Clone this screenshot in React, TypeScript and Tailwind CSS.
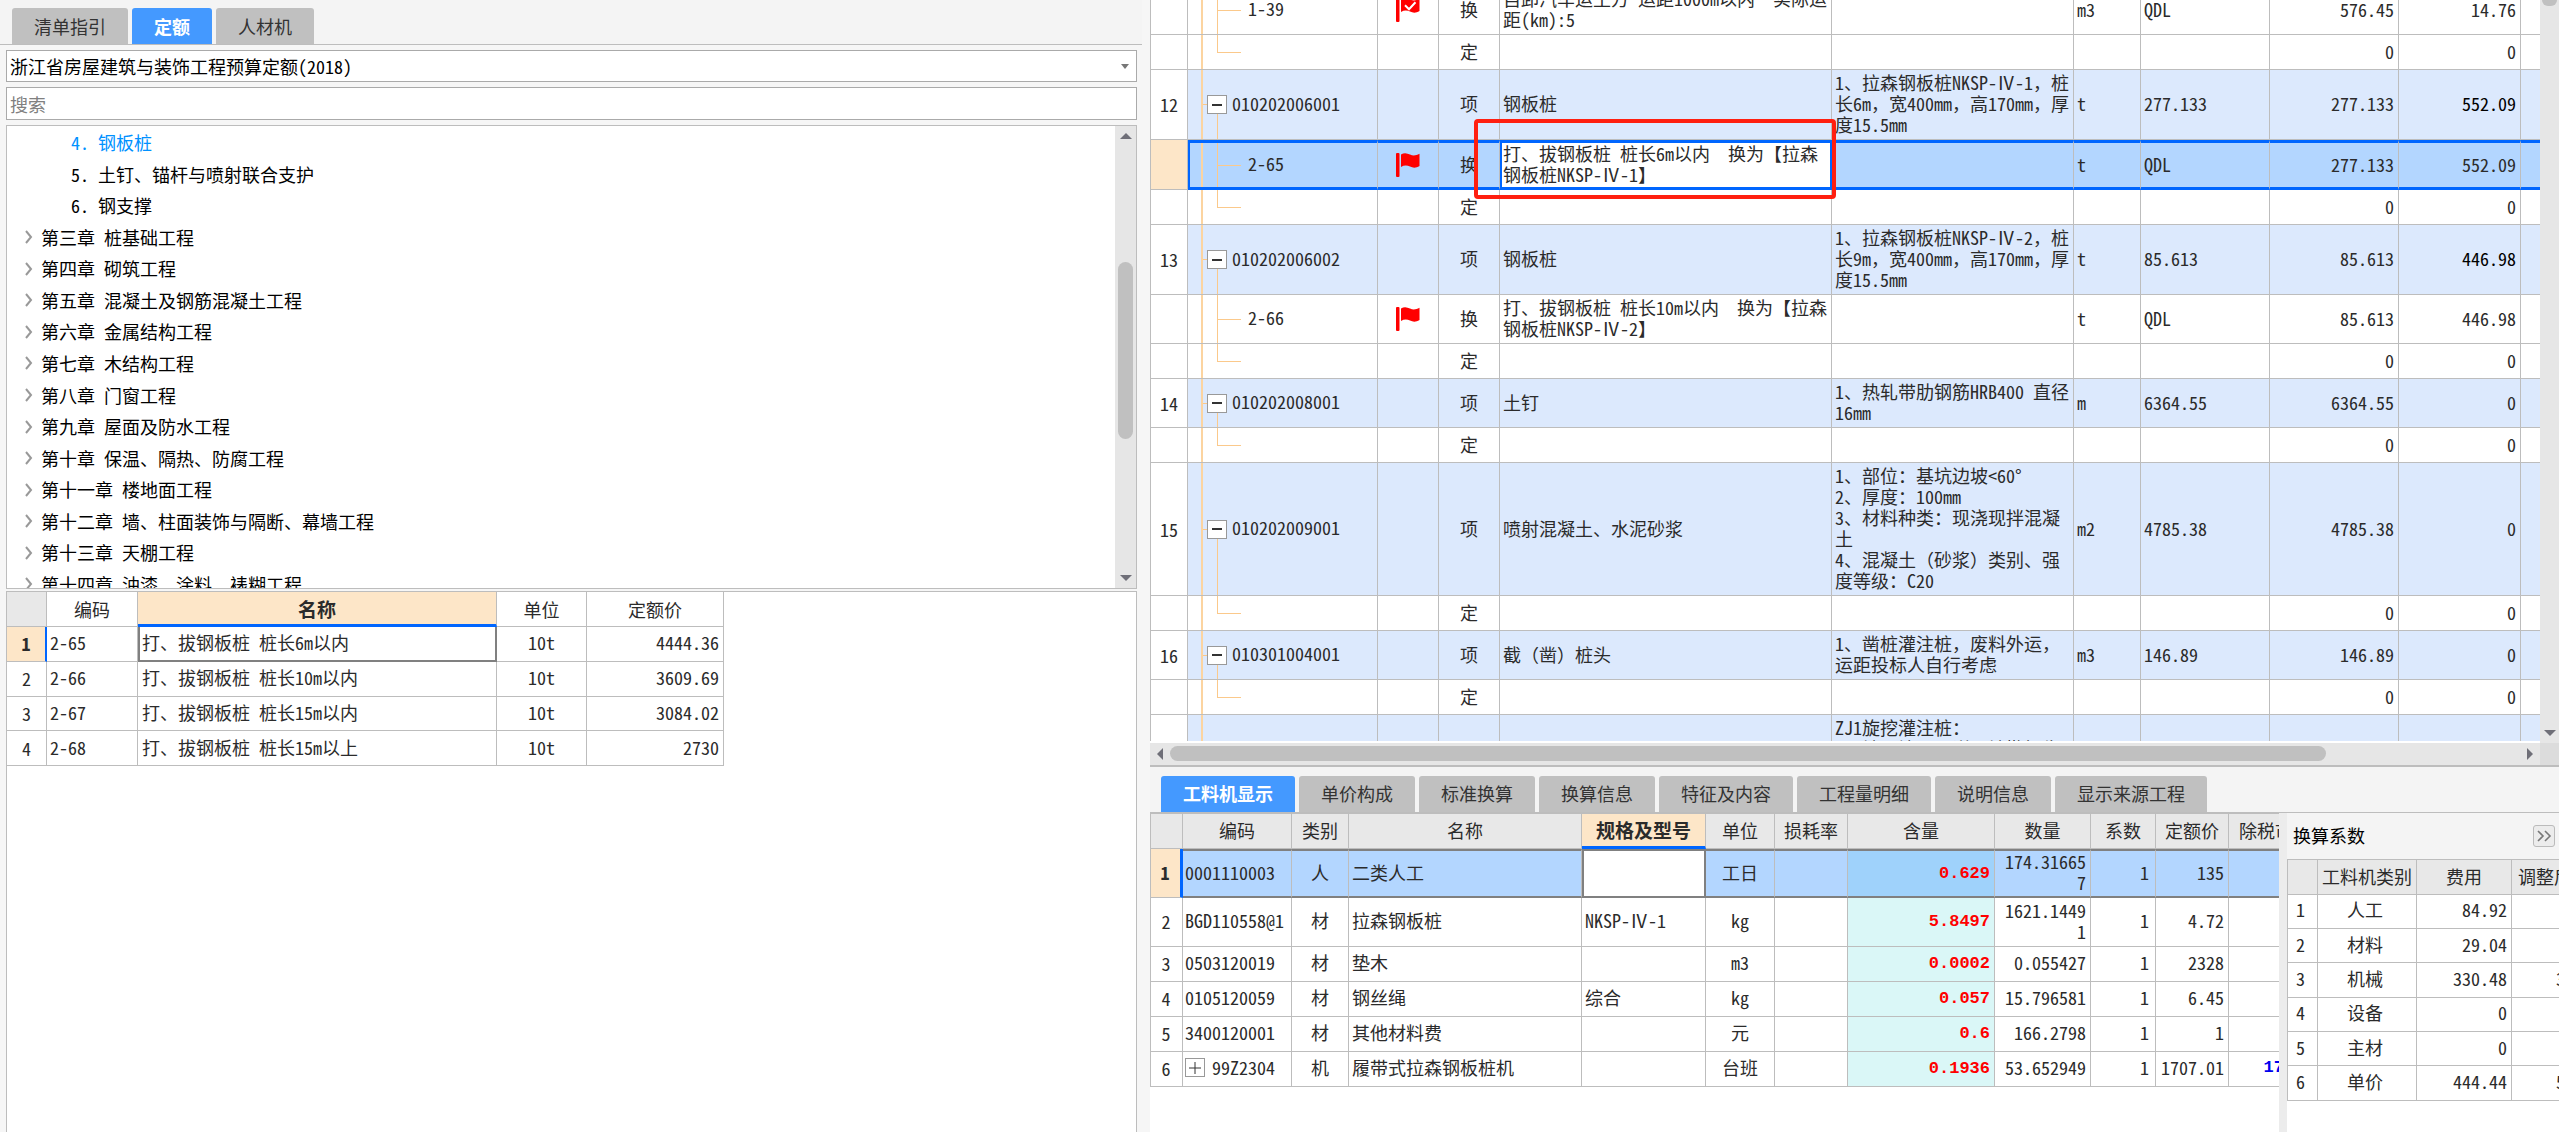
import React, { useState } from 'react';

type RowKind = 'item' | 'sub' | 'last';

interface BillRow {
  kind: RowKind;
  height: string;
  no?: string;
  code?: string;
  flag?: 'plain' | 'checked';
  type: string;
  name?: string;
  feature?: string;
  unit?: string;
  expr?: string;
  qty: string;
  price: string;
  selected?: boolean;
}

interface Resource {
  code: string;
  expandable?: boolean;
  type: string;
  name: string;
  spec: string;
  unit: string;
  content: string;
  qty: string;
  price: string;
  market?: string;
}

const subItems = ['4. 钢板桩', '5. 土钉、锚杆与喷射联合支护', '6. 钢支撑'];

const chapters = [
  '第三章 桩基础工程',
  '第四章 砌筑工程',
  '第五章 混凝土及钢筋混凝土工程',
  '第六章 金属结构工程',
  '第七章 木结构工程',
  '第八章 门窗工程',
  '第九章 屋面及防水工程',
  '第十章 保温、隔热、防腐工程',
  '第十一章 楼地面工程',
  '第十二章 墙、柱面装饰与隔断、幕墙工程',
  '第十三章 天棚工程',
  '第十四章 油漆、涂料、裱糊工程',
];

const quotas = [
  { code: '2-65', name: '打、拔钢板桩 桩长6m以内', price: '4444.36' },
  { code: '2-66', name: '打、拔钢板桩 桩长10m以内', price: '3609.69' },
  { code: '2-67', name: '打、拔钢板桩 桩长15m以内', price: '3084.02' },
  { code: '2-68', name: '打、拔钢板桩 桩长15m以上', price: '2730' },
];

const billRows: BillRow[] = [
  { kind: 'sub', height: 'h-[49px]', code: '1-39', flag: 'checked', type: '换', name: '自卸汽车运土方 运距1000m以内  实际运\n距(km):5', unit: 'm3', expr: 'QDL', qty: '576.45', price: '14.76' },
  { kind: 'last', height: 'h-[35px]', type: '定', qty: '0', price: '0' },
  { kind: 'item', height: 'h-[70px]', no: '12', code: '010202006001', type: '项', name: '钢板桩', feature: '1、拉森钢板桩NKSP-Ⅳ-1，桩\n长6m，宽400mm，高170mm，厚\n度15.5mm', unit: 't', expr: '277.133', qty: '277.133', price: '552.09' },
  { kind: 'sub', height: 'h-[50px]', code: '2-65', flag: 'plain', type: '换', name: '打、拔钢板桩 桩长6m以内  换为【拉森\n钢板桩NKSP-Ⅳ-1】', unit: 't', expr: 'QDL', qty: '277.133', price: '552.09', selected: true },
  { kind: 'last', height: 'h-[35px]', type: '定', qty: '0', price: '0' },
  { kind: 'item', height: 'h-[70px]', no: '13', code: '010202006002', type: '项', name: '钢板桩', feature: '1、拉森钢板桩NKSP-Ⅳ-2，桩\n长9m，宽400mm，高170mm，厚\n度15.5mm', unit: 't', expr: '85.613', qty: '85.613', price: '446.98' },
  { kind: 'sub', height: 'h-[49px]', code: '2-66', flag: 'plain', type: '换', name: '打、拔钢板桩 桩长10m以内  换为【拉森\n钢板桩NKSP-Ⅳ-2】', unit: 't', expr: 'QDL', qty: '85.613', price: '446.98' },
  { kind: 'last', height: 'h-[35px]', type: '定', qty: '0', price: '0' },
  { kind: 'item', height: 'h-[49px]', no: '14', code: '010202008001', type: '项', name: '土钉', feature: '1、热轧带肋钢筋HRB400 直径\n16mm', unit: 'm', expr: '6364.55', qty: '6364.55', price: '0' },
  { kind: 'last', height: 'h-[35px]', type: '定', qty: '0', price: '0' },
  { kind: 'item', height: 'h-[133px]', no: '15', code: '010202009001', type: '项', name: '喷射混凝土、水泥砂浆', feature: '1、部位：基坑边坡<60°\n2、厚度：100mm\n3、材料种类：现浇现拌混凝\n土\n4、混凝土（砂浆）类别、强\n度等级：C20', unit: 'm2', expr: '4785.38', qty: '4785.38', price: '0' },
  { kind: 'last', height: 'h-[35px]', type: '定', qty: '0', price: '0' },
  { kind: 'item', height: 'h-[49px]', no: '16', code: '010301004001', type: '项', name: '截（凿）桩头', feature: '1、凿桩灌注桩，废料外运，\n运距投标人自行考虑', unit: 'm3', expr: '146.89', qty: '146.89', price: '0' },
  { kind: 'last', height: 'h-[35px]', type: '定', qty: '0', price: '0' },
  { kind: 'item', height: 'h-[133px]', no: '17', code: '010302001001', type: '项', name: '泥浆护壁成孔灌注桩', feature: 'ZJ1旋挖灌注桩：\n1、地层情况：详见地勘报告\n2、桩径：800mm\n3、成孔方法：旋挖成孔\n4、混凝土强度等级：C35\n5、桩长：详见图纸', unit: 'm3', expr: '0', qty: '0', price: '0' },
];

const detailTabs = ['工料机显示', '单价构成', '标准换算', '换算信息', '特征及内容', '工程量明细', '说明信息', '显示来源工程'];

const resources: Resource[] = [
  { code: '0001110003', type: '人', name: '二类人工', spec: '', unit: '工日', content: '0.629', qty: '174.31665\n7', price: '135' },
  { code: 'BGD110558@1', type: '材', name: '拉森钢板桩', spec: 'NKSP-Ⅳ-1', unit: 'kg', content: '5.8497', qty: '1621.1449\n1', price: '4.72' },
  { code: '0503120019', type: '材', name: '垫木', spec: '', unit: 'm3', content: '0.0002', qty: '0.055427', price: '2328' },
  { code: '0105120059', type: '材', name: '钢丝绳', spec: '综合', unit: 'kg', content: '0.057', qty: '15.796581', price: '6.45' },
  { code: '3400120001', type: '材', name: '其他材料费', spec: '', unit: '元', content: '0.6', qty: '166.2798', price: '1' },
  { code: '99Z2304', expandable: true, type: '机', name: '履带式拉森钢板桩机', spec: '', unit: '台班', content: '0.1936', qty: '53.652949', price: '1707.01', market: '1707.01' },
];

const factors = [
  { type: '人工', cost: '84.92', adjusted: '84.92' },
  { type: '材料', cost: '29.04', adjusted: '29.04' },
  { type: '机械', cost: '330.48', adjusted: '330.48' },
  { type: '设备', cost: '0', adjusted: '0' },
  { type: '主材', cost: '0', adjusted: '0' },
  { type: '单价', cost: '444.44', adjusted: '544.44' },
];

// Latin is half width everywhere, but CJK punctuation keeps its full width
const Mixed: React.FC<{ text?: string }> = ({ text = '' }) => (
  <>
    {text.split(/([，（）：【】Ⅳ])/).map((part, i) =>
      i % 2 === 1 ? (
        <span key={i} className="[font-feature-settings:normal]">
          {part}
        </span>
      ) : (
        part
      )
    )}
  </>
);

const Arrow: React.FC<{ dir: 'up' | 'down' | 'left' | 'right' }> = ({ dir }) => {
  const points = {
    up: '0,9 6,3 12,9',
    down: '0,3 6,9 12,3',
    left: '9,0 3,6 9,12',
    right: '3,0 9,6 3,12',
  };
  return (
    <svg viewBox="0 0 12 12" className="block h-3 w-3 shrink-0 fill-[#6f6f78]">
      <polygon points={points[dir]} />
    </svg>
  );
};

const Flag: React.FC<{ checked?: boolean }> = ({ checked }) => (
  <svg viewBox="0 0 24 24" className="block h-6 w-6">
    <rect x="0" y="0" width="3.5" height="24" rx="1" fill="#ff0000" />
    <path d="M5 1.5C8-0.6 11 0 14 1.5S20 2.6 23.5 0.8V13C20 15.2 17 15 14 13.6S8 12.2 5 14Z" fill="#ff0000" />
    {checked && <path d="M9 7.2l4 4 6.5-7" fill="none" stroke="#fff" strokeWidth="2" />}
  </svg>
);

interface TabsProps {
  tabs: string[];
  active: string;
  onChange: (tab: string) => void;
}

const Tabs: React.FC<TabsProps> = ({ tabs, active, onChange }) => (
  <div className="flex gap-1">
    {tabs.map((tab) => (
      <button
        key={tab}
        onClick={() => onChange(tab)}
        className={`h-9 rounded-t-[3px] px-[22px] ${
          tab === active ? 'bg-[#4499ff] font-bold text-white' : 'bg-[#c0c0c0] text-[#333]'
        }`}
      >
        {tab}
      </button>
    ))}
  </div>
);

// Code column: tree lines, expander and the code itself
const CodeCell: React.FC<{ row: BillRow }> = ({ row }) => (
  <div className="flex h-full items-stretch">
    <div className={`shrink-0 border-r-2 border-[#fcd4a0] ${row.selected ? 'w-[13px]' : 'w-[15px]'}`} />
    {row.kind === 'item' ? (
      <>
        <div className="h-px w-1 shrink-0 self-center bg-[#fbc98b]" />
        <div className="flex w-5 shrink-0 flex-col items-center">
          <div className="flex-1" />
          <button aria-label="折叠" className="flex h-[19px] w-5 items-center justify-center border border-[#999] bg-white">
            <span className="h-[2px] w-2.5 bg-[#333]" />
          </button>
          <div className="w-px flex-1 bg-[#fbc98b]" />
        </div>
        <span className="self-center pb-[3px] pl-[5px]">{row.code}</span>
      </>
    ) : (
      <>
        <div className="w-3.5 shrink-0" />
        <div className="flex w-6 shrink-0 flex-col">
          <div className="flex-1 border-b border-l border-[#fbc98b]" />
          <div className={`flex-1 ${row.kind === 'sub' ? 'border-l border-[#fbc98b]' : ''}`} />
        </div>
        <span className="self-center pb-[3px] pl-[7px]">{row.code}</span>
      </>
    )}
  </div>
);

const BillTable: React.FC = () => (
  <table className="-mt-3.5 w-full table-fixed border-separate border-spacing-0 border-l border-[#bdbdbd]">
    <colgroup>
      <col className="w-[37px]" />
      <col className="w-[190px]" />
      <col className="w-[61px]" />
      <col className="w-[61px]" />
      <col className="w-[332px]" />
      <col className="w-[242px]" />
      <col className="w-[67px]" />
      <col className="w-[129px]" />
      <col className="w-[129px]" />
      <col className="w-[122px]" />
      <col />
    </colgroup>
    <tbody>
      {billRows.map((row, i) => {
        const line = row.selected
          ? 'border-y-[3px] border-r border-y-[#0066ff] border-r-[#bdbdbd]'
          : 'border-b border-r border-[#bdbdbd]';
        const bg = row.selected ? 'bg-[#b3d6ff]' : row.kind === 'item' ? 'bg-[#dce9fd]' : 'bg-white';
        const cell = `${line} ${bg} p-0 align-middle whitespace-pre`;
        const textCell = `${cell} pb-0.5 pl-[3px]`;
        const numberCell = `${cell} pr-1 pb-0.5 text-right`;
        return (
          <tr key={i} className={row.height}>
            <td className={`border-r border-b border-[#bdbdbd] p-0 text-center ${row.selected ? 'bg-[#fde6c8]' : 'bg-white'}`}>
              {row.no}
            </td>
            <td className={`${cell} ${row.height} ${row.selected ? 'border-l-2 border-l-[#0066ff]' : ''}`}>
              <CodeCell row={row} />
            </td>
            <td className={`${cell} pl-[18px]`}>{row.flag && <Flag checked={row.flag === 'checked'} />}</td>
            <td className={`${cell} pb-0.5 text-center`}>{row.type}</td>
            {row.selected ? (
              <td className="relative border-x-2 border-y-[3px] border-[#0066ff] bg-white p-0 pb-0.5 pl-px align-middle whitespace-pre">
                <Mixed text={row.name} />
                <span className="pointer-events-none absolute -top-6 -right-1.5 -bottom-3 -left-7 z-10 rounded-[4px] border-4 border-[#ff1f10]" />
              </td>
            ) : (
              <td className={textCell}>
                <Mixed text={row.name} />
              </td>
            )}
            <td className={textCell}>
              <Mixed text={row.feature} />
            </td>
            <td className={textCell}>{row.unit}</td>
            <td className={textCell}>{row.expr}</td>
            <td className={numberCell}>{row.qty}</td>
            <td className={`${numberCell} ${row.kind === 'item' && row.price !== '0' ? 'text-black' : ''}`}>{row.price}</td>
            <td className={`${line} ${bg} border-r-0`} />
          </tr>
        );
      })}
    </tbody>
  </table>
);

const ResourceTable: React.FC = () => {
  const head = 'border-r border-b border-[#bdbdbd] bg-[#e8e8e8] p-0 font-normal whitespace-nowrap';
  return (
    <table className="w-[1190px] table-fixed border-separate border-spacing-0 border-t border-l border-[#bdbdbd]">
      <colgroup>
        <col className="w-8" />
        <col className="w-[109px]" />
        <col className="w-[57px]" />
        <col className="w-[233px]" />
        <col className="w-[124px]" />
        <col className="w-[69px]" />
        <col className="w-[73px]" />
        <col className="w-[147px]" />
        <col className="w-24" />
        <col className="w-[65px]" />
        <col className="w-[73px]" />
        <col />
      </colgroup>
      <thead>
        <tr className="h-[35px]">
          <th className={head} />
          <th className={head}>编码</th>
          <th className={head}>类别</th>
          <th className={head}>名称</th>
          <th className="border-r border-b-[3px] border-r-[#bdbdbd] border-b-[#0066ff] bg-[#fde6c8] p-0 text-[19px] font-bold">规格及型号</th>
          <th className={head}>单位</th>
          <th className={head}>损耗率</th>
          <th className={head}>含量</th>
          <th className={head}>数量</th>
          <th className={head}>系数</th>
          <th className={head}>定额价</th>
          <th className={head}>除税市场价</th>
        </tr>
      </thead>
      <tbody>
        {resources.map((r, i) => {
          const first = i === 0;
          const height = first || i === 1 ? 'h-[49px]' : 'h-[35px]';
          const cell = first
            ? 'border-y-2 border-r border-y-[#808080] border-r-[#bdbdbd] bg-[#b3d6ff] p-0 pb-0.5 whitespace-pre'
            : 'border-r border-b border-[#bdbdbd] p-0 pb-0.5 whitespace-pre';
          return (
            <tr key={r.code} className={height}>
              <td
                className={`p-0 pr-px text-center ${
                  first
                    ? 'border-r-[3px] border-b border-r-[#0066ff] border-b-[#bdbdbd] bg-[#fde6c8] font-bold'
                    : 'border-r border-b border-[#bdbdbd]'
                }`}
              >
                {i + 1}
              </td>
              <td className={`${cell} pl-0.5`}>
                {r.expandable ? (
                  <div className="flex items-center gap-[7px]">
                    <button aria-label="展开" className="flex h-[19px] w-5 items-center justify-center border border-[#999] bg-white">
                      <svg viewBox="0 0 12 12" className="h-3 w-3 stroke-[#333]">
                        <path d="M6 0v12M0 6h12" />
                      </svg>
                    </button>
                    <span>{r.code}</span>
                  </div>
                ) : (
                  r.code
                )}
              </td>
              <td className={`${cell} text-center`}>{r.type}</td>
              <td className={`${cell} pl-[3px]`}>{r.name}</td>
              {first ? (
                <td className="border-2 border-[#808080] bg-white p-0" />
              ) : (
                <td className={`${cell} pl-[3px]`}>
                  <Mixed text={r.spec} />
                </td>
              )}
              <td className={`${cell} text-center`}>{r.unit}</td>
              <td className={cell} />
              <td
                className={`p-0 pr-1 text-right font-['Liberation_Mono',monospace] text-[17px] font-bold text-[#ff0000] ${
                  first
                    ? 'border-y-2 border-r border-y-[#808080] border-r-[#bdbdbd] bg-[#9fd2fb]'
                    : 'border-r border-b border-[#bdbdbd] bg-[#daf7f7]'
                }`}
              >
                {r.content}
              </td>
              <td className={`${cell} pr-1 text-right`}>{r.qty}</td>
              <td className={`${cell} pr-1.5 text-right`}>1</td>
              <td className={`${cell} pr-1 text-right`}>{r.price}</td>
              <td className={`${cell} pr-1 text-right font-['Liberation_Mono',monospace] text-[17px] font-bold text-[#0000ee]`}>
                {r.market}
              </td>
            </tr>
          );
        })}
      </tbody>
    </table>
  );
};

const FactorPanel: React.FC = () => {
  const cell = 'border-r border-b border-[#bdbdbd] p-0 whitespace-nowrap';
  const head = `${cell} bg-[#e8e8e8] font-normal`;
  return (
    <aside className="flex w-[272px] shrink-0 flex-col overflow-hidden bg-white">
      <div className="flex h-[46px] shrink-0 items-center justify-between bg-[#f4f4f4] pr-1 pl-1.5">
        <h2 className="text-black">换算系数</h2>
        <button aria-label="收起" className="flex h-[22px] w-[22px] items-center justify-center rounded-[3px] border border-[#bbb] bg-[#ececec]">
          <svg viewBox="0 0 16 16" className="h-4 w-4 fill-none stroke-[#777]" strokeWidth="1.6">
            <path d="M2 3l5 5-5 5M9 3l5 5-5 5" />
          </svg>
        </button>
      </div>
      <table className="h-[242px] w-[328px] table-fixed border-separate border-spacing-0 border-t border-l border-[#bdbdbd]">
        <colgroup>
          <col className="w-[30px]" />
          <col className="w-[99px]" />
          <col className="w-[95px]" />
          <col />
        </colgroup>
        <thead>
          <tr className="h-[35px]">
            <th className={head} />
            <th className={head}>工料机类别</th>
            <th className={head}>费用</th>
            <th className={head}>调整后费用</th>
          </tr>
        </thead>
        <tbody>
          {factors.map((f, i) => (
            <tr key={f.type}>
              <td className={`${cell} pr-1 pb-[3px] text-center`}>{i + 1}</td>
              <td className={`${cell} pr-1 pb-[3px] text-center`}>{f.type}</td>
              <td className={`${cell} pr-1 pb-[3px] text-right`}>{f.cost}</td>
              <td className={`${cell} pr-1 pb-[3px] text-right`}>{f.adjusted}</td>
            </tr>
          ))}
        </tbody>
      </table>
    </aside>
  );
};

const QuotaTable: React.FC = () => {
  const cell = 'border-r border-b border-[#bdbdbd] p-0 whitespace-nowrap';
  return (
    <table className="h-[174px] w-[717px] table-fixed border-separate border-spacing-0">
      <colgroup>
        <col className="w-10" />
        <col className="w-[91px]" />
        <col className="w-[359px]" />
        <col className="w-[90px]" />
        <col />
      </colgroup>
      <thead>
        <tr className="h-[35px]">
          <th className={`${cell} bg-[#e8e8e8]`} />
          <th className={`${cell} font-normal`}>编码</th>
          <th className="border-r border-b-[3px] border-r-[#bdbdbd] border-b-[#0066ff] bg-[#fde6c8] p-0 text-[19px] font-bold">名称</th>
          <th className={`${cell} font-normal`}>单位</th>
          <th className={`${cell} font-normal`}>定额价</th>
        </tr>
      </thead>
      <tbody>
        {quotas.map((q, i) => (
          <tr key={q.code}>
            <td
              className={`p-0 text-center ${
                i === 0
                  ? 'border-r-2 border-b border-r-[#0066ff] border-b-[#bdbdbd] bg-[#fde6c8] font-bold'
                  : 'border-r border-b border-[#bdbdbd]'
              }`}
            >
              {i + 1}
            </td>
            <td className={`${cell} pb-0.5 pl-[3px]`}>{q.code}</td>
            <td className={i === 0 ? 'border-2 border-t-0 border-[#808080] p-0 pb-px pl-0.5' : `${cell} pb-0.5 pl-1`}>{q.name}</td>
            <td className={`${cell} pb-0.5 text-center`}>10t</td>
            <td className={`${cell} pr-1 pb-0.5 text-right`}>{q.price}</td>
          </tr>
        ))}
      </tbody>
    </table>
  );
};

const QuotaPanel: React.FC = () => {
  const [tab, setTab] = useState('定额');
  return (
    <section className="flex min-w-0 flex-col overflow-hidden bg-[#f6f6f6]">
      <div className="mr-2 h-[45px] shrink-0 border-b border-[#bdbdbd] bg-[#f4f4f4] pt-2 pl-3">
        <Tabs tabs={['清单指引', '定额', '人材机']} active={tab} onChange={setTab} />
      </div>
      <div className="flex min-h-0 flex-1 flex-col pt-[5px] pr-[13px] pl-1.5 text-black">
        <div className="flex h-8 shrink-0 items-center border border-[#aaa] bg-white pr-[7px]">
          <select aria-label="定额库" className="h-full flex-1 appearance-none pl-[3px] outline-none">
            <option>浙江省房屋建筑与装饰工程预算定额(2018)</option>
          </select>
          <svg viewBox="0 0 8 5" className="h-[5px] w-2 fill-[#777]">
            <polygon points="0,0 8,0 4,5" />
          </svg>
        </div>
        <input
          aria-label="搜索"
          placeholder="搜索"
          className="mt-[5px] h-[33px] shrink-0 border border-[#aaa] bg-white pl-[3px] outline-none placeholder:text-[#808080]"
        />
        <div className="mt-[5px] flex h-[464px] shrink-0 overflow-hidden border border-[#bdbdbd] bg-white">
          <ul className="grid h-[474px] flex-1 auto-rows-fr pt-px">
            {subItems.map((item, i) => (
              <li key={item} className={`flex items-center pl-16 ${i === 0 ? 'text-[#0091ff]' : ''}`}>
                {item}
              </li>
            ))}
            {chapters.map((chapter) => (
              <li key={chapter} className="flex items-center gap-[7px] pl-[18px]">
                <svg viewBox="0 0 9 14" className="h-3.5 w-[9px] fill-none stroke-[#999]" strokeWidth="2">
                  <path d="M1 1l5 6-5 6" />
                </svg>
                <span>{chapter}</span>
              </li>
            ))}
          </ul>
          <div className="flex w-[21px] shrink-0 flex-col items-center justify-between bg-[#e6e6e6] py-1">
            <Arrow dir="up" />
            <div className="w-full flex-1 px-[3px] pt-[120px]">
              <div className="h-[177px] rounded-full bg-[#c0c0c0]" />
            </div>
            <Arrow dir="down" />
          </div>
        </div>
        <div className="mt-0.5 min-h-0 flex-1 border border-b-0 border-[#bdbdbd] bg-white text-[#2b2b2b]">
          <QuotaTable />
        </div>
      </div>
    </section>
  );
};

const BillPanel: React.FC = () => {
  const [tab, setTab] = useState('工料机显示');
  return (
    <section className="flex min-w-0 flex-col overflow-hidden">
      <div className="flex min-h-0 flex-[766_1_0%] flex-col">
        <div className="flex min-h-0 flex-1">
          <div className="mb-0.5 min-w-0 flex-1 overflow-hidden">
            <BillTable />
          </div>
          <div className="flex w-[19px] shrink-0 flex-col items-center justify-between bg-[#e6e6e6] pb-1">
            <div className="h-1.5 w-[15px] rounded-b-full bg-[#c0c0c0]" />
            <Arrow dir="down" />
          </div>
        </div>
        <div className="flex h-[22px] shrink-0 bg-[#dcdcdc]">
          <div className="flex flex-1 items-center bg-[#e6e6e6] px-1">
            <Arrow dir="left" />
            <div className="flex-1 pr-[198px] pl-1">
              <div className="h-[15px] rounded-full bg-[#c0c0c0]" />
            </div>
            <Arrow dir="right" />
          </div>
          <div className="w-[19px] shrink-0" />
        </div>
      </div>
      <div className="flex min-h-0 flex-[366_1_0%] flex-col border-t-2 border-[#bdbdbd]">
        <div className="h-[46px] shrink-0 border-b border-[#bdbdbd] bg-[#f4f4f4] pt-[9px] pl-[11px]">
          <Tabs tabs={detailTabs} active={tab} onChange={setTab} />
        </div>
        <div className="flex min-h-0 flex-1">
          <div className="min-w-0 flex-1 overflow-hidden bg-white">
            <ResourceTable />
          </div>
          <div className="w-2 shrink-0 bg-[#ececec]" />
          <FactorPanel />
        </div>
      </div>
    </section>
  );
};

export default function App() {
  return (
    <main className="grid h-screen w-full grid-cols-[1150fr_1409fr] overflow-hidden bg-white font-['Noto_Sans_CJK_SC',sans-serif] text-[18px] leading-[21px] text-[#2b2b2b] [font-feature-settings:'hwid']">
      <QuotaPanel />
      <BillPanel />
    </main>
  );
}
